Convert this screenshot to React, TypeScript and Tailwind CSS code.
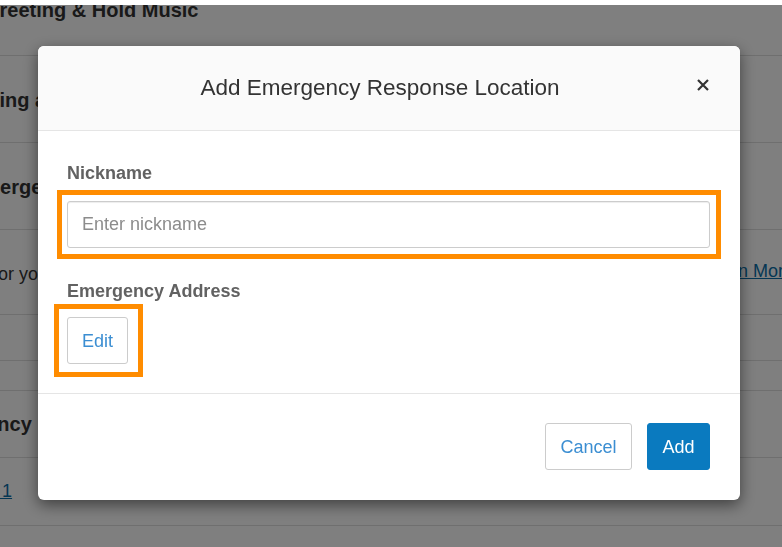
import React from "react";

const font = { fontFamily: '"Liberation Sans", Arial, sans-serif' };

function BackgroundPage() {
  return (
    <div className="w-[782px] h-[547px] overflow-hidden bg-white text-[#333]" style={font}>
      <div className="h-[5px] bg-white" />
      <div className="h-[542px] overflow-hidden">
        <div className="h-[51px] border-b border-[#dedede] flex flex-col">
          <div className="mt-[-6px] ml-[-16px] whitespace-nowrap text-[20px] leading-[23px] font-bold">
            Greeting &amp; Hold Music
          </div>
        </div>
        <div className="h-[87px] border-b border-[#dedede] pt-[33px]">
          <div className="ml-[-46px] whitespace-nowrap text-[20px] leading-[23px] font-bold">
            Routing and Forwarding
          </div>
        </div>
        <div className="h-[87px] border-b border-[#dedede] pt-[33px]">
          <div className="ml-[-31px] whitespace-nowrap text-[20px] leading-[23px] font-bold">
            Emergency Services
          </div>
        </div>
        <div className="h-[85px] border-b border-[#dedede] flex items-start">
          <div className="mt-[34px] ml-[-7px] w-[709px] shrink-0 whitespace-nowrap text-[18px] leading-[20px]">
            for your phones and devices.
          </div>
          <a className="mt-[31px] whitespace-nowrap text-[18px] leading-[20px] text-[#0b6fa8] underline">
            Learn More
          </a>
        </div>
        <div className="h-[46px] border-b border-[#dedede]" />
        <div className="h-[30px] border-b border-[#dedede]" />
        <div className="h-[67px] border-b border-[#dedede] pt-[22px]">
          <div className="ml-[-76px] whitespace-nowrap text-[20px] leading-[23px] font-bold">
            Emergency Response Locations
          </div>
        </div>
        <div className="h-[68px] border-b border-[#dedede] pt-[23px]">
          <a className="block ml-[-71px] whitespace-nowrap text-[18px] leading-[20px] text-[#0b6fa8] underline">
            Location 1
          </a>
        </div>
      </div>
    </div>
  );
}

function CloseIcon() {
  return (
    <svg width="12" height="12" viewBox="0 0 12 12" className="block">
      <path d="M1 1 L11 11 M11 1 L1 11" stroke="#333" strokeWidth="2.2" strokeLinecap="butt" />
    </svg>
  );
}

function Modal() {
  return (
    <div className="w-[702px] rounded-[6px] bg-white shadow-[0_5px_15px_rgba(0,0,0,0.5)]" style={font}>
      <div className="h-[85px] bg-[#fafafa] border-b border-[#e5e5e5] rounded-t-[6px] flex items-center pl-[30px] pr-[30px]">
        <div className="flex-1 text-center text-[22.5px] leading-[26px] text-[#333]">
          Add Emergency Response Location
        </div>
        <button className="w-[18px] h-[12px] flex items-center justify-end pr-[1px] mt-[-6px]">
          <CloseIcon />
        </button>
      </div>
      <div className="pl-[29px] pr-[30px] pt-[32px] pb-[16px]">
        <div className="text-[18px] leading-[20px] font-bold text-[#626262]">Nickname</div>
        <div className="mt-[7px] ml-[-10px] mr-[-11px] border-[5px] border-[#ff8c00] pl-[5px] pr-[6px] py-[6px]">
          <input
            className="block w-full h-[47px] border border-[#cccccc] rounded-[3px] px-[14px] text-[18px] text-[#333] placeholder:text-[#8c8c8c] shadow-[inset_0_1px_1px_rgba(0,0,0,0.075)] outline-none"
            style={font}
            placeholder="Enter nickname"
          />
        </div>
        <div className="mt-[22px] text-[18px] leading-[20px] font-bold text-[#626262]">Emergency Address</div>
        <div className="mt-[3px] ml-[-13px] w-fit border-[5px] border-[#ff8c00] pl-[8px] pr-[10px] py-[8px]">
          <button
            className="block h-[47px] w-[61px] border border-[#cccccc] rounded-[3px] bg-white text-[18px] leading-[20px] text-[#3b8ed2]"
            style={font}
          >
            Edit
          </button>
        </div>
      </div>
      <div className="border-t border-[#e5e5e5] pt-[29px] pb-[30px] pr-[30px] flex justify-end gap-[15px]">
        <button
          className="h-[47px] w-[87px] border border-[#cccccc] rounded-[3px] bg-white text-[18px] leading-[20px] text-[#3b8ed2]"
          style={font}
        >
          Cancel
        </button>
        <button
          className="h-[47px] w-[63px] border border-[#0a7abf] rounded-[3px] bg-[#0a7abf] text-[18px] leading-[20px] text-white"
          style={font}
        >
          Add
        </button>
      </div>
    </div>
  );
}

export default function App() {
  return (
    <div className="relative w-[782px] h-[547px] overflow-hidden">
      <BackgroundPage />
      <div className="fixed left-0 right-0 top-[5px] bottom-0 bg-black/50 pt-[41px] pl-[38px]">
        <Modal />
      </div>
    </div>
  );
}
